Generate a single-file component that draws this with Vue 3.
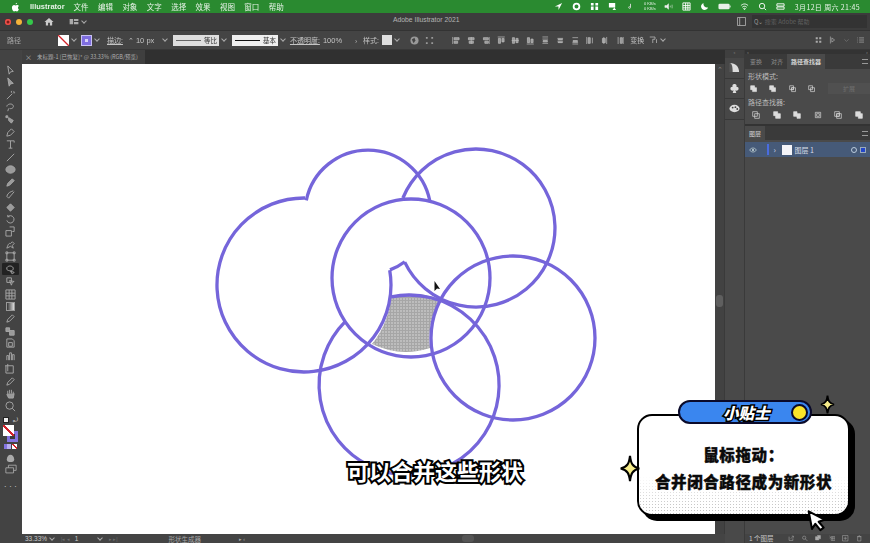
<script setup>
const menus = ['文件', '编辑', '对象', '文字', '选择', '效果', '视图', '窗口', '帮助'];

// clockwise arc on a circle, end points are projected on to it
function arc(cx, cy, r, from, to) {
  const a0 = Math.atan2(from[1] - cy, from[0] - cx);
  const a1 = Math.atan2(to[1] - cy, to[0] - cx);
  let d = a1 - a0;
  if (d < 0) d += Math.PI * 2;
  const p = (a) => `${(cx + r * Math.cos(a)).toFixed(1)} ${(cy + r * Math.sin(a)).toFixed(1)}`;
  return `M${p(a0)} A${r} ${r} 0 ${d > Math.PI ? 1 : 0} 1 ${p(a1)}`;
}

const outlines = [
  arc(304, 285, 87, [390, 270], [305, 198]),
  arc(368, 213, 63, [305, 200], [429, 201]),
  arc(368, 213, 61, [405, 262], [390, 270]),
  arc(476, 228, 79, [403, 198], [405, 262]),
  arc(409, 385, 90, [391, 296], [346, 322]),
];

const tools = [
  'M3 1l6 6-3 .5L4.5 10z',
  'M3 1l6 6-3 .5L4.5 10z|f',
  'M2 10l6-6M7 1v2M9 3h2M9 1l1 1',
  'M2 5c0-3 6-4 7-1 1 2-2 4-4 3M4 7l-1 3',
  'M1 2h2v2H1zM4 4l5 3-2 3-3-3z|f',
  'M2 10l1-4 4-4 3 3-4 4z',
  'M2 2h8v2M6 2v8M4 10h4',
  'M2 10l8-8',
  'M1 6a5 4 0 1 0 10 0a5 4 0 1 0-10 0|f',
  'M2 10l1-3 5-5 2 2-5 5z|f',
  'M2 8c1-4 4-5 7-6M2 8l2 2 6-7',
  'M2 6l4-4 4 4-4 4z|f',
  'M3 3a4 4 0 1 1-1 4M3 1v2h2',
  'M1 5h6v6H1zM5 1h5v5H8',
  'M2 10c1-3 2-6 4-5l2-2 2 2-2 2 1 3-3-2z',
  'M2 2h8v8H2zM1 1h2v2H1zM9 1h2v2H9zM1 9h2v2H1zM9 9h2v2H9z',
  'M2 4c2-3 7-2 7 1s-5 3-7 1zM6 8l4 1-2 2z',
  'M2 2h5v5H2zM5 5l5 1-2 1-1 3z',
  'M1 1h10v10H1zM1 4.500h10M1 7.500h10M4.500 1v10M7.500 1v10',
  'M1 1h10v10H1z|g',
  'M2 10l1-3 5-5 2 2-5 5z',
  'M1 2h4v4H1zM5 5h5v5H5z|f',
  'M2 1h6l2 2v7H2zM4 5h4v4H4z',
  'M2 10V5h2v5M5 10V2h2v8M8 10V4h2v6',
  'M1 3h8v8H1zM3 1v8M1 3H0',
  'M2 10l1-3 5-5 2 2-5 5z',
  'M3 6V3m2 3V2m2 4V2m2 5V4M3 6l-1 1 2 4h5l1-5|f',
  'M1 5a4 4 0 1 0 8 0a4 4 0 1 0-8 0M8 8l3 3',
];

const aligns = [
  'M1 1v10M3 2h7v3H3zM3 7h5v3H3z', 'M6 1v10M2 2h8v3H2zM3 7h6v3H3z', 'M11 1v10M2 2h7v3H2zM4 7h5v3H4z',
  'M1 1h10M2 3v7h3V3zM7 3v5h3V3z', 'M1 6h10M2 2v8h3V2zM7 3v6h3V3z', 'M1 11h10M2 2v7h3V2zM7 4v5h3V4z',
  'M2 1h8M2 4h8M3 6h6v2H3zM2 10h8', 'M2 3h8M3 4h6v1H3zM2 7h8M3 8h6v1H3z', 'M2 2h8M3 6h6v2H3zM2 9h8M2 11h8',
  'M1 1v10M3 2h3v8H3zM9 2v8', 'M4 1v10M8 1v10M2 3h4v6H2z', 'M3 1v10M6 2h3v8H6zM11 1v10',
];

const shapeModes = [
  'M1 1h6v6H1zM4 4h6v6H4z|f', 'M4 4h6v6H4zM1 1h6v3H4v3H1z|f', 'M1 1h6v6H1zM4 4h6v6H4zM4 4h3v3H4z', 'M1 1h6v6H1zM4 4h6v6H4z',
];
const finders = [
  'M1 1h7v7H1zM4 4h7v7H4z', 'M1 1h6v6H1zM4 4h7v7H4z|f', 'M1 1h5v7H1zM6 4h5v7H6z|f',
  'M2 2h8v8H2zM4 4h4v4H4z', 'M1 1h7v7H1zM4 4h7v7H4zM4 4h4v4H4z', 'M1 1h7v7H1zM5 4h6v7H5z|f',
];
const footIcons = [
  'M2 3v7h7V6M5 7l5-5M7 2h3v3',
  'M1 5a3 3 0 1 0 6 0a3 3 0 1 0-6 0M6 7l4 4',
  'M1 3h6v6H1zM4 1h6v6H8|f',
  'M1 2l2 2-2 2M4 3h7v7H4zM4 6h7M7 3v7',
  'M1 1h10v10H1zM6 3v6M3 6h6',
  'M3 3h6v8H3zM2 3h8M5 1h2',
];

const pathOf = (s) => s.split('|')[0];
const isFilled = (s) => s.endsWith('|f');
</script>

<template>
  <div class="screen">
    <header class="menubar">
      <svg class="apple" viewBox="0 0 12 14"><path d="M8.300 1c.1 1-.9 2.300-2.100 2.300C6 2.200 7.200 1.100 8.300 1zM10.700 10.300c-.6 1.500-1.500 2.900-2.600 2.900-.8 0-1.100-.5-2.100-.5s-1.300.5-2.100.5C2.500 13.200 1 10.500 1 8.100 1 5.700 2.600 4.300 4 4.300c.9 0 1.500.6 2.100.6s1.300-.6 2.300-.6c.7 0 1.800.3 2.400 1.300-1.900 1.100-1.600 3.800-.1 4.700z" fill="#fff"/></svg>
      <b class="app-name">Illustrator</b>
      <span v-for="m in menus" :key="m" class="menu-item">{{ m }}</span>
      <div class="status-icons">
        <svg viewBox="0 0 10 10"><path d="M9 1L1 5h4v4z" fill="#fff"/></svg>
        <svg viewBox="0 0 10 10"><circle cx="5" cy="5" r="3.200" fill="none" stroke="#fff" stroke-width="2"/></svg>
        <svg viewBox="0 0 10 10"><path d="M1 1h3v3H1zM6 1h3v3H6zM1 5h3v4H1zM6 5h3v4H6z" fill="#fff"/></svg>
        <svg viewBox="0 0 10 10"><path d="M1 1h7v5H1zM7 6l2 3H5z" fill="#fff"/></svg>
        <svg viewBox="0 0 10 10"><path d="M5 2v4a1 1 0 1 1-1-1" fill="none" stroke="#ddd"/></svg>
        <span class="netspeed">0 KB/s<br>0 KB/s</span>
        <svg viewBox="0 0 10 10"><path d="M1 4h2l2-2v6L3 6H1zM7 4v2M9 3v4" fill="#eee" stroke="#eee" stroke-width=".6"/></svg>
        <svg viewBox="0 0 10 10"><path d="M1 1h8v8H1zM1 4h8M1 6.500h8M4 1v8M6.500 1v8" fill="none" stroke="#fff"/></svg>
        <svg viewBox="0 0 10 10"><path d="M4 1a4 4 0 1 0 5 5A4 4 0 0 1 4 1z" fill="#fff"/></svg>
        <svg class="battery" viewBox="0 0 14 8"><rect x=".5" y="1" width="12" height="6" rx="1.500" fill="#e8f0e8"/><path d="M13 3v2" stroke="#fff"/></svg>
        <svg viewBox="0 0 10 10"><path d="M1 4c2.500-2.400 5.500-2.400 8 0M2.500 5.800c1.600-1.400 3.400-1.400 5 0M5 8.500l-1-1.200c.6-.4 1.400-.4 2 0z" fill="none" stroke="#fff"/></svg>
        <svg viewBox="0 0 10 10"><circle cx="4.500" cy="4.500" r="3" fill="none" stroke="#fff"/><path d="M7 7l2 2" stroke="#fff"/></svg>
        <svg viewBox="0 0 10 10"><path d="M1 2h8v2.500H1zM1 5.500h8V8H1z" fill="none" stroke="#fff"/></svg>
        <span class="clock">3月12日 周六 21:45</span>
      </div>
    </header>

    <div class="titlebar">
      <div class="lights"><i class="red"></i><i class="amber"></i><i class="green"></i></div>
      <svg class="home" viewBox="0 0 10 10"><path d="M5 1L0 5.500h1.500V9.500h2.500V6.500h2v3h2.500V5.500H10z" fill="#ccc"/></svg>
      <svg class="layout-icon" viewBox="0 0 10 8"><path d="M0 1h4v6H0zM5 1h5v2.500H5zM5 4.500h5V7H5z" fill="#aaa"/></svg>
      <span class="chev"></span>
      <span class="app-title">Adobe Illustrator 2021</span>
      <div class="help-wrap">
        <svg class="panel-toggle" viewBox="0 0 10 10"><path d="M.5.500h9v9h-9zM3 .5v9" fill="none" stroke="#aaa"/></svg>
        <div class="help-search"><span class="help-mark">Q⌄</span> 搜索 Adobe 帮助</div>
      </div>
    </div>

    <div class="controlbar">
      <span class="ctl-kind">路径</span>
      <span class="stroke-swatch"></span><span class="chev"></span>
      <span class="fill-swatch"><i></i></span><span class="chev"></span>
      <u class="ctl-label stroke-label">描边:</u>
      <span class="stepper">⌃</span>
      <span class="ctl-value px">10 px</span>
      <span class="chev"></span>
      <span class="stroke-preview">
        <i class="thin"></i>等比
      </span><span class="chev"></span>
      <span class="stroke-preview basic">
        <i></i>基本
      </span><span class="chev"></span>
      <u class="ctl-label opacity-label">不透明度:</u>
      <span class="ctl-value opacity">100%</span>
      <span class="ctl-more">›</span>
      <span class="ctl-label">样式:</span>
      <span class="style-swatch"></span><span class="chev"></span>
      <svg class="globe" viewBox="0 0 10 10"><circle cx="5" cy="5" r="4.500" fill="#999"/><path d="M2 4l3-2 1 3-2 3z" fill="#444"/></svg>
      <svg class="dist" viewBox="0 0 10 10"><path d="M1 1h2v2H1zM7 1h2v2H7zM1 7h2v2H1zM7 7h2v2H7z" fill="#999"/></svg>
      <div class="align-row">
        <svg v-for="(a, i) in aligns" :key="i" viewBox="0 0 12 12"><path :d="a" fill="#999" stroke="#bbb"/></svg>
      </div>
      <span class="ctl-label transform">变换</span>
      <svg class="xf" viewBox="0 0 12 10"><path d="M1 1h7v3H5v5M10 4v5" fill="none" stroke="#bbb"/></svg>
      <span class="chev"></span>
      <div class="ctl-right">
        <svg viewBox="0 0 10 10"><path d="M1 1h3v3H1zM6 1h3v3H6zM1 6h3v3H1zM6 6h3v3H6z" fill="#aaa"/></svg>
        <svg viewBox="0 0 10 10"><path d="M2 0v10M4 2l4 3-4 3z" fill="none" stroke="#aaa"/></svg>
        <svg class="dim" viewBox="0 0 10 10"><path d="M2 4l3 3 3-3" fill="none" stroke="#777"/></svg>
        <svg viewBox="0 0 10 10"><path d="M3 2h7M3 5h7M3 8h7M0 2h1M0 5h1M0 8h1" stroke="#aaa"/></svg>
      </div>
    </div>

    <div class="workspace">
      <aside class="toolbar">
        <div
          v-for="(t, i) in tools.slice(0, 19)"
          :key="'a' + i"
          :class="['tool', { active: i === 16 }]"
        >
          <svg viewBox="0 0 12 12"><path :d="pathOf(t)" :fill="isFilled(t) ? '#9a9a9a' : 'none'" stroke="#a8a8a8" stroke-width="1"/></svg>
        </div>
        <div class="tool gradient-tool"><i></i></div>
        <div v-for="(t, i) in tools.slice(20)" :key="'b' + i" class="tool">
          <svg viewBox="0 0 12 12"><path :d="pathOf(t)" :fill="isFilled(t) ? '#9a9a9a' : 'none'" stroke="#a8a8a8" stroke-width="1"/></svg>
        </div>
        <div class="mini-swaps"><i></i><b>⤾</b></div>
        <div class="colour-pair">
          <span class="back"><i></i></span>
          <span class="front"></span>
        </div>
        <div class="colour-modes"><i class="m1"></i><i class="m2"></i></div>
        <div class="tool small-tool">
          <svg viewBox="0 0 12 12"><path d="M2 8c0-3 2-5 4-5s4 2 4 5-2 3-4 3-4 0-4-3z" fill="#aaa"/></svg>
        </div>
        <div class="tool screen-tool">
          <svg viewBox="0 0 14 12"><path d="M1 4h9v6H1zM4 4V1h9v6h-3" fill="none" stroke="#aaa"/></svg>
        </div>
        <div class="tool-dots">•••</div>
      </aside>

      <main class="doc-area">
        <div class="tabbar">
          <div class="doc-tab"><span class="tab-x">×</span>未标题-1 [已恢复]* @ 33.33% (RGB/预览)</div>
        </div>
        <div class="doc-body">
          <div class="canvas">
            <svg class="artwork" viewBox="22 64 693 470">
              <defs>
                <pattern id="stipple" width="3" height="3" patternUnits="userSpaceOnUse">
                  <rect width="3" height="3" fill="#bdbdbd"/>
                  <path d="M0 .5h3M.5 0v3" stroke="#a6a6a6" stroke-width="1"/>
                </pattern>
              </defs>
              <path
                d="M391 296 A90 90 0 0 1 440 299 A82 82 0 0 0 430 348 A79 79 0 0 1 372 344 A87 87 0 0 0 391 296z"
                fill="url(#stipple)"
              />
              <g fill="none" stroke="#7565da" stroke-width="3.300">
                <circle cx="411" cy="278" r="79"/>
                <circle cx="513" cy="338" r="82"/>
                <path v-for="(d, i) in outlines" :key="i" :d="d"/>
              </g>
              <path d="M434.500 281v10l2.500-2.500 3 .5z" fill="#111"/>
            </svg>
          </div>
          <div class="vscroll"><i></i><span>⌃</span><span class="down">⌄</span></div>
        </div>
        <footer class="statusbar">
          <span class="zoom-val">33.33%</span><span class="chev"></span>
          <span class="nav dim">|◂ ◂</span>
          <span class="page-val">1</span><span class="chev"></span>
          <span class="nav dim">▸ ▸|</span>
          <span class="tool-name">形状生成器</span>
          <span class="nav play">▸ ‹</span>
          <span class="hscroll"></span>
        </footer>
      </main>

      <div class="dock">
        <div class="dock-head">«</div>
        <div class="dock-cell">
          <svg viewBox="0 0 12 12"><path d="M1 11V1c6 0 10 4 10 10z" fill="#ddd"/><path d="M1 11V1c2 0 3 4 3 10z" fill="#555"/></svg>
        </div>
        <div class="dock-cell">
          <svg viewBox="0 0 12 12"><path d="M6 1a2 2 0 0 1 2 3 2.200 2.200 0 1 1-1 4l1 3H4l1-3a2.200 2.200 0 1 1-1-4 2 2 0 0 1 2-3z" fill="#ddd"/></svg>
        </div>
        <div class="dock-cell">
          <svg viewBox="0 0 12 12"><ellipse cx="6" cy="6" rx="5.500" ry="4" fill="#ddd"/><circle cx="4" cy="5" r="1" fill="#444"/><circle cx="7" cy="4.500" r="1" fill="#444"/><circle cx="9" cy="6.500" r="1" fill="#444"/></svg>
        </div>
      </div>

      <aside class="panels">
        <div class="panels-grip"><span>«</span><span>»</span></div>
        <section class="finder-panel">
          <div class="panel-tabs">
            <span>变换</span><span>对齐</span><span class="on">路径查找器</span>
            <em class="burger"></em>
          </div>
          <div class="panel-heading">形状模式:</div>
          <div class="mode-row">
            <svg v-for="(s, i) in shapeModes" :key="i" viewBox="0 0 12 12"><path :d="pathOf(s)" :fill="isFilled(s) ? '#ddd' : 'none'" stroke="#ddd"/></svg>
            <span class="expand">扩展</span>
          </div>
          <div class="panel-heading second">路径查找器:</div>
          <div class="finder-row">
            <svg v-for="(s, i) in finders" :key="i" viewBox="0 0 12 12"><path :d="pathOf(s)" :fill="isFilled(s) ? '#ddd' : 'none'" stroke="#ddd"/></svg>
          </div>
        </section>
        <section class="layers-panel">
          <div class="panel-tabs layers"><span class="on">图层</span><em class="burger"></em></div>
          <div class="layer-row">
            <svg class="eye" viewBox="0 0 12 8"><path d="M1 4c2-4 8-4 10 0-2 4-8 4-10 0z" fill="none" stroke="#cdd"/><circle cx="6" cy="4" r="1.500" fill="#cdd"/></svg>
            <i class="layer-bar"></i>
            <span class="layer-arrow">›</span>
            <i class="layer-thumb"></i>
            <span class="layer-name">图层 1</span>
            <i class="layer-target"></i>
            <i class="layer-sel"></i>
          </div>
          <div class="layers-fill"></div>
          <footer class="layers-foot">
            <span>1 个图层</span>
            <svg v-for="(f, i) in footIcons" :key="i" viewBox="0 0 12 12"><path :d="pathOf(f)" :fill="isFilled(f) ? '#aaa' : 'none'" stroke="#aaa"/></svg>
          </footer>
        </section>
      </aside>
    </div>

    <div class="subtitle">可以合并这些形状</div>

    <div class="tip">
      <div class="tip-card">
        <div class="halftone"></div>
        <p class="tip-line">鼠标拖动：</p>
        <p class="tip-line">合并闭合路径成为新形状</p>
      </div>
      <div class="tip-pill">
        <span class="tip-name">小贴士</span>
        <i class="tip-dot"></i>
      </div>
      <svg class="spark spark-a" viewBox="0 0 24 32"><path d="M12 1c1 9 3 13 11 15-8 2-10 6-11 15-1-9-3-13-11-15 8-2 10-6 11-15z" fill="#f6ec8a" stroke="#000" stroke-width="2.500"/></svg>
      <svg class="spark spark-b" viewBox="0 0 24 32"><path d="M12 1c1 9 3 13 11 15-8 2-10 6-11 15-1-9-3-13-11-15 8-2 10-6 11-15z" fill="#f6ec8a" stroke="#000" stroke-width="3"/></svg>
      <svg class="tip-cursor" viewBox="0 0 24 26"><path d="M2 2l19 10-7 2.500 6 7-4 3-6-7.500-4 6z" fill="#fff" stroke="#000" stroke-width="2.500" stroke-linejoin="round"/></svg>
    </div>
  </div>
</template>

<style scoped>
.screen {
  position: relative;
  display: flex;
  flex-direction: column;
  width: 870px;
  height: 543px;
  overflow: hidden;
  background: #444;
  color: #c4c4c4;
  font-family: "Noto Sans CJK SC", "Liberation Sans", sans-serif;
  font-size: 7px;
}

.chev {
  display: inline-block;
  flex: none;
  width: 4px;
  height: 4px;
  margin: -2px 0 0 3px;
  border-right: 1px solid #aaa;
  border-bottom: 1px solid #aaa;
  box-sizing: border-box;
  transform: rotate(45deg);
}

/* menu bar */
.menubar {
  display: flex;
  flex: none;
  align-items: center;
  height: 13px;
  padding-left: 11px;
  background: #2a8a30;
  color: #e6f2e6;
  font-size: 7.500px;
  filter: blur(.25px);
}

.apple {
  width: 9px;
  height: 10px;
}

.app-name {
  margin: 0 9px 0 10px;
  font-family: "Liberation Sans", sans-serif;
}

.menu-item {
  width: 24.400px;
}

.status-icons {
  display: flex;
  align-items: center;
  margin-left: auto;
  padding-right: 10px;
}

.status-icons svg {
  width: 9px;
  height: 9px;
  margin-right: 9px;
}

.status-icons .battery {
  width: 13px;
}

.netspeed {
  margin-right: 8px;
  font-family: "Liberation Sans", sans-serif;
  font-size: 4px;
  line-height: 4.500px;
}

.clock {
  margin-left: 1px;
  font-size: 7px;
  letter-spacing: .35px;
}

/* title bar */
.titlebar {
  display: flex;
  flex: none;
  align-items: center;
  height: 18px;
  padding-left: 5px;
  background: #3c3c3c;
  border-bottom: 1px solid #333;
  box-sizing: border-box;
}

.lights {
  display: flex;
  gap: 5px;
}

.lights i {
  width: 6px;
  height: 6px;
  border-radius: 50%;
}

.red { background: #f0524c; box-shadow: inset 0 0 0 1.500px #f0524c, inset 0 0 0 3px #7d1c18; }
.amber { background: #f5b33a; }
.green { background: #34c84a; }

.home {
  width: 10px;
  height: 9px;
  margin-left: 11px;
}

.layout-icon {
  width: 10px;
  height: 7px;
  margin-left: 15px;
}

.app-title {
  position: absolute;
  left: 393px;
  top: 16px;
  color: #b4b4b4;
  font-family: "Liberation Sans", sans-serif;
  font-size: 6.800px;
}

.help-wrap {
  display: flex;
  align-items: center;
  margin-left: auto;
  padding-right: 3px;
}

.panel-toggle {
  width: 9px;
  height: 9px;
  margin-right: 6px;
}

.help-search {
  width: 115px;
  height: 13px;
  padding-left: 2px;
  background: #333;
  color: #5f5f5f;
  font-size: 6px;
  line-height: 13px;
  box-sizing: border-box;
}

.help-mark {
  color: #999;
}

/* control bar */
.controlbar {
  display: flex;
  flex: none;
  align-items: center;
  height: 19px;
  padding-left: 7px;
  background: #444;
  border-bottom: 1px solid #383838;
  box-sizing: border-box;
  filter: blur(.2px);
}

.ctl-kind {
  width: 51px;
  color: #a8a8a8;
}

.stroke-swatch {
  width: 11px;
  height: 11px;
  background: linear-gradient(to top right, #fff 45%, #d3232a 46%, #d3232a 54%, #fff 55%);
}

.fill-swatch {
  display: flex;
  align-items: center;
  justify-content: center;
  width: 11px;
  height: 11px;
  margin-left: 5px;
  background: #7f6ee0;
  box-shadow: inset 0 0 0 1px #c9c2f2;
}

.fill-swatch i {
  width: 3px;
  height: 3px;
  background: #d8d3f5;
}

.ctl-label {
  margin-right: 3px;
  white-space: nowrap;
}

.stroke-label {
  margin-left: 8px;
}

.stepper {
  width: 10px;
  text-align: center;
  font-size: 7px;
}

.ctl-value {
  font-family: "Liberation Sans", sans-serif;
  font-size: 7.500px;
}

.px {
  width: 24px;
}

.stroke-preview {
  display: flex;
  align-items: center;
  gap: 3px;
  width: 46px;
  height: 11px;
  margin-left: 6px;
  padding: 0 2px 0 3px;
  background: #dedede;
  color: #333;
  font-size: 6.500px;
  box-sizing: border-box;
}

.stroke-preview i {
  flex: 1;
  height: 1px;
  background: #111;
}

.stroke-preview .thin {
  background: #666;
}

.basic {
  background: #efefef;
}

.opacity-label {
  margin-left: 5px;
}

.opacity {
  width: 32px;
}

.ctl-more {
  width: 8px;
}

.style-swatch {
  width: 10px;
  height: 10px;
  background: #dedede;
}

.globe {
  width: 9px;
  height: 9px;
  margin-left: 11px;
}

.dist {
  width: 9px;
  height: 9px;
  margin-left: 6px;
}

.align-row {
  display: flex;
  gap: 6.400px;
  margin-left: 18px;
}

.align-row svg {
  width: 8.500px;
  height: 9px;
}

.transform {
  margin-left: 6px;
}

.xf {
  width: 9px;
  height: 8px;
  margin-left: 2px;
}

.ctl-right {
  display: flex;
  gap: 7px;
  margin-left: auto;
  padding-right: 6px;
}

.ctl-right svg {
  width: 7px;
  height: 8px;
}

/* workspace */
.workspace {
  display: flex;
  flex: 1;
  min-height: 0;
}

.toolbar {
  display: flex;
  flex: none;
  flex-direction: column;
  align-items: center;
  width: 21px;
  margin-right: 1px;
  padding-top: 14px;
  background: #434343;
  box-sizing: border-box;
}

.tool {
  display: flex;
  align-items: center;
  justify-content: center;
  width: 17px;
  height: 12.450px;
  flex: none;
}

.tool svg {
  width: 11px;
  height: 11px;
}

.tool.active {
  background: #222;
  border-radius: 1px;
}

.gradient-tool i {
  width: 9px;
  height: 9px;
  background: linear-gradient(to right, #333, #ddd);
  border: 1px solid #999;
  box-sizing: border-box;
}

.mini-swaps {
  display: flex;
  align-items: center;
  justify-content: space-between;
  width: 14px;
  height: 9px;
  margin-top: 3px;
  color: #bbb;
  font-size: 6px;
}

.mini-swaps i {
  width: 4px;
  height: 4px;
  background: #eee;
  box-shadow: 0 0 0 1px #222;
}

.colour-pair {
  position: relative;
  width: 16px;
  height: 17px;
  margin-top: 1px;
}

.colour-pair .front {
  position: absolute;
  left: 0;
  top: 0;
  width: 11px;
  height: 11px;
  background: linear-gradient(to top right, #fff 42%, #d3232a 43%, #d3232a 55%, #fff 56%);
}

.colour-pair .back {
  position: absolute;
  right: 1px;
  bottom: 0;
  display: flex;
  align-items: center;
  justify-content: center;
  width: 11px;
  height: 11px;
  background: #8474e0;
}

.colour-pair .back i {
  width: 5px;
  height: 5px;
  background: #3c3c3c;
}

.colour-modes {
  display: flex;
  gap: 1px;
  margin-top: 2px;
}

.colour-modes i {
  width: 5px;
  height: 5px;
}

.m1 { background: linear-gradient(to right, #8474e0 50%, #b8aef0 50%); width: 7px !important; }
.m2 { background: linear-gradient(to top right, #fff 40%, #d3232a 41%, #d3232a 60%, #fff 61%); }

.small-tool {
  margin-top: 2px;
}

.screen-tool svg {
  width: 12px;
}

.tool-dots {
  margin-top: 6px;
  color: #bbb;
  font-size: 5px;
  letter-spacing: .2px;
}

/* document */
.doc-area {
  display: flex;
  flex: none;
  flex-direction: column;
  width: 703px;
}

.tabbar {
  flex: none;
  height: 14px;
  background: #303030;
}

.doc-tab {
  display: flex;
  align-items: center;
  width: 123px;
  height: 14px;
  padding-left: 3px;
  background: #3f3f3f;
  color: #b0b0b0;
  font-size: 5.500px;
  white-space: nowrap;
  box-sizing: border-box;
}

.tab-x {
  margin-right: 5px;
  font-size: 7px;
}

.doc-body {
  display: flex;
  flex: 1;
  min-height: 0;
}

.canvas {
  flex: 1;
  background: #fff;
}

.artwork {
  display: block;
  width: 693px;
  height: 470px;
}

.vscroll {
  position: relative;
  flex: none;
  width: 10px;
  background: #424242;
  border-right: 1px solid #3a3a3a;
  box-sizing: border-box;
  color: #888;
  text-align: center;
  font-size: 7px;
  line-height: 10px;
}

.vscroll i {
  position: absolute;
  left: 1px;
  top: 231px;
  width: 7px;
  height: 12px;
  border-radius: 3px;
  background: #5f5f5f;
}

.vscroll .down {
  position: absolute;
  left: 2px;
  bottom: 22px;
}

.statusbar {
  display: flex;
  flex: none;
  align-items: center;
  height: 9px;
  padding-left: 3px;
  background: #444;
  color: #c8c8c8;
  font-family: "Liberation Sans", sans-serif;
  font-size: 6.500px;
  white-space: nowrap;
}

.statusbar .chev {
  margin-left: 3px;
}

.statusbar .nav {
  color: #6e6e6e;
  font-size: 5px;
}

.statusbar .dim {
  margin-left: 7px;
}

.page-val {
  width: 20px;
  margin-left: 5px;
}

.tool-name {
  margin-left: 51px;
  color: #a8a8a8;
  font-family: "Noto Sans CJK SC", sans-serif;
  font-size: 6.500px;
}

.statusbar .play {
  margin-left: 38px;
  color: #aaa;
}

.hscroll {
  width: 12px;
  height: 7px;
  margin-left: 217px;
  border-radius: 3px;
  background: #555;
}

/* dock + panels */
.dock {
  flex: none;
  width: 20px;
  background: #494949;
  border-right: 1px solid #3a3a3a;
  box-sizing: border-box;
}

.dock-head {
  height: 8px;
  color: #888;
  font-size: 4px;
  line-height: 4px;
  text-align: center;
  background: #3f3f3f;
}

.dock-cell {
  display: flex;
  align-items: center;
  justify-content: center;
  height: 20.500px;
  background: #474747;
  border-bottom: 1px solid #383838;
  box-sizing: border-box;
}

.dock-cell svg {
  width: 11px;
  height: 11px;
}

.panels {
  display: flex;
  flex: 1;
  flex-direction: column;
  min-width: 0;
  background: #333;
}

.panels-grip {
  display: flex;
  flex: none;
  justify-content: space-between;
  height: 4px;
  padding: 0 2px;
  color: #888;
  font-size: 4px;
  line-height: 4px;
}

.finder-panel {
  flex: none;
  height: 70px;
  background: #4a4a4a;
}

.panel-tabs {
  position: relative;
  display: flex;
  align-items: center;
  height: 15px;
  background: #3a3a3a;
  color: #909090;
  font-size: 6px;
}

.panel-tabs span {
  display: flex;
  align-items: center;
  height: 15px;
  padding: 0 4px 0 5px;
  margin-right: 0;
}

.panel-tabs .on {
  padding: 0 4px;
  background: #4a4a4a;
  color: #d4d4d4;
  font-weight: 700;
}

.burger {
  position: absolute;
  right: 2px;
  top: 5px;
  width: 6px;
  height: 3px;
  border-top: 1px solid #999;
  border-bottom: 1px solid #999;
}

.panel-heading {
  margin: 2px 0 0 3px;
  color: #bcbcbc;
  font-size: 7px;
  line-height: 11px;
}

.panel-heading.second {
  margin-top: 2px;
}

.mode-row {
  display: flex;
  align-items: center;
  height: 13px;
  padding-left: 5px;
  gap: 11.500px;
}

.mode-row svg {
  width: 8px;
  height: 8px;
}

.expand {
  width: 43px;
  margin-left: 1px;
  height: 11px;
  background: #505050;
  color: #6f6f6f;
  font-size: 6px;
  line-height: 11px;
  text-align: center;
}

.finder-row {
  display: flex;
  align-items: center;
  height: 13px;
  padding-left: 7px;
  gap: 12.500px;
}

.finder-row svg {
  width: 8px;
  height: 8px;
}

.layers-panel {
  display: flex;
  flex: 1;
  flex-direction: column;
  min-height: 0;
  margin-top: 2px;
  background: #4a4a4a;
}

.panel-tabs.layers {
  height: 14px;
}

.panel-tabs.layers span {
  height: 14px;
  font-weight: 400;
}

.layer-row {
  display: flex;
  flex: none;
  align-items: center;
  height: 15px;
  margin-top: 2px;
  padding-left: 4px;
  background: #465a78;
  color: #d8dee8;
  box-sizing: border-box;
}

.eye {
  width: 8px;
  height: 6px;
}

.layer-bar {
  width: 1.500px;
  height: 11px;
  margin-left: 10px;
  background: #4a6ce0;
}

.layer-arrow {
  width: 6px;
  margin-left: 5px;
  font-size: 8px;
  line-height: 8px;
}

.layer-thumb {
  width: 10px;
  height: 10px;
  margin-left: 2px;
  background: #f4f4f8;
}

.layer-name {
  margin-left: 3px;
  font-size: 7px;
}

.layer-target {
  width: 4px;
  height: 4px;
  margin-left: auto;
  border: 1px solid #bcd;
  border-radius: 50%;
}

.layer-sel {
  width: 4px;
  height: 4px;
  margin: 0 4px 0 3px;
  background: #2346c8;
  border: 1px solid #9ab;
}

.layers-fill {
  flex: 1;
}

.layers-foot {
  display: flex;
  flex: none;
  align-items: center;
  gap: 7px;
  height: 9px;
  padding-left: 4px;
  background: #444;
  color: #c8c8c8;
  font-size: 6.500px;
  line-height: 9px;
}

.layers-foot span {
  width: 32px;
  white-space: nowrap;
}

.layers-foot svg {
  width: 6.500px;
  height: 6.500px;
}

/* overlays */
.subtitle {
  position: absolute;
  left: 347px;
  top: 454px;
  color: #fff;
  font-size: 22px;
  font-weight: 700;
  line-height: 32px;
  white-space: nowrap;
  -webkit-text-stroke: 4px #000;
  paint-order: stroke fill;
}

.tip {
  position: absolute;
  left: 618px;
  top: 395px;
  width: 252px;
  height: 148px;
}

.tip-card {
  position: absolute;
  left: 19px;
  top: 19px;
  display: flex;
  flex-direction: column;
  align-items: center;
  width: 213px;
  height: 102px;
  padding-top: 25px;
  overflow: hidden;
  background: #fff;
  border: 2px solid #000;
  border-radius: 15px;
  box-shadow: 5px 5px 0 #000;
  box-sizing: border-box;
}

.halftone {
  position: absolute;
  left: 0;
  right: 0;
  bottom: 0;
  height: 38px;
  background-image: radial-gradient(circle, #c4c4c4 38%, transparent 42%);
  background-size: 3px 3px;
  -webkit-mask-image: linear-gradient(to top, #000 20%, transparent);
  mask-image: linear-gradient(to top, #000 20%, transparent);
}

.tip-line {
  position: relative;
  margin: 0;
  color: #0a0a0a;
  font-size: 15.500px;
  font-weight: 900;
  line-height: 27px;
  letter-spacing: .6px;
  white-space: nowrap;
  -webkit-text-stroke: .4px #0a0a0a;
}

.tip-pill {
  position: absolute;
  left: 60px;
  top: 5px;
  display: flex;
  align-items: center;
  justify-content: space-between;
  width: 134px;
  height: 24px;
  padding: 0 2px 0 43px;
  background: #3a86ef;
  border: 2px solid #0a0a2a;
  border-radius: 12px;
  box-sizing: border-box;
}

.tip-name {
  color: #fff;
  font-size: 15.500px;
  font-style: italic;
  font-weight: 900;
  line-height: 20px;
  -webkit-text-stroke: 3px #000;
  paint-order: stroke fill;
}

.tip-dot {
  width: 17px;
  height: 17px;
  background: #fbe52a;
  border: 2px solid #0a0a2a;
  border-radius: 50%;
  box-sizing: border-box;
}

.spark {
  position: absolute;
}

.spark-a {
  left: 0;
  top: 60px;
  width: 24px;
  height: 27px;
}

.spark-b {
  left: 202px;
  top: 0;
  width: 15px;
  height: 19px;
}

.tip-cursor {
  position: absolute;
  left: 189px;
  top: 114px;
  width: 20px;
  height: 23px;
}
</style>

<style>
html,
body {
  background: #444;
}
</style>
